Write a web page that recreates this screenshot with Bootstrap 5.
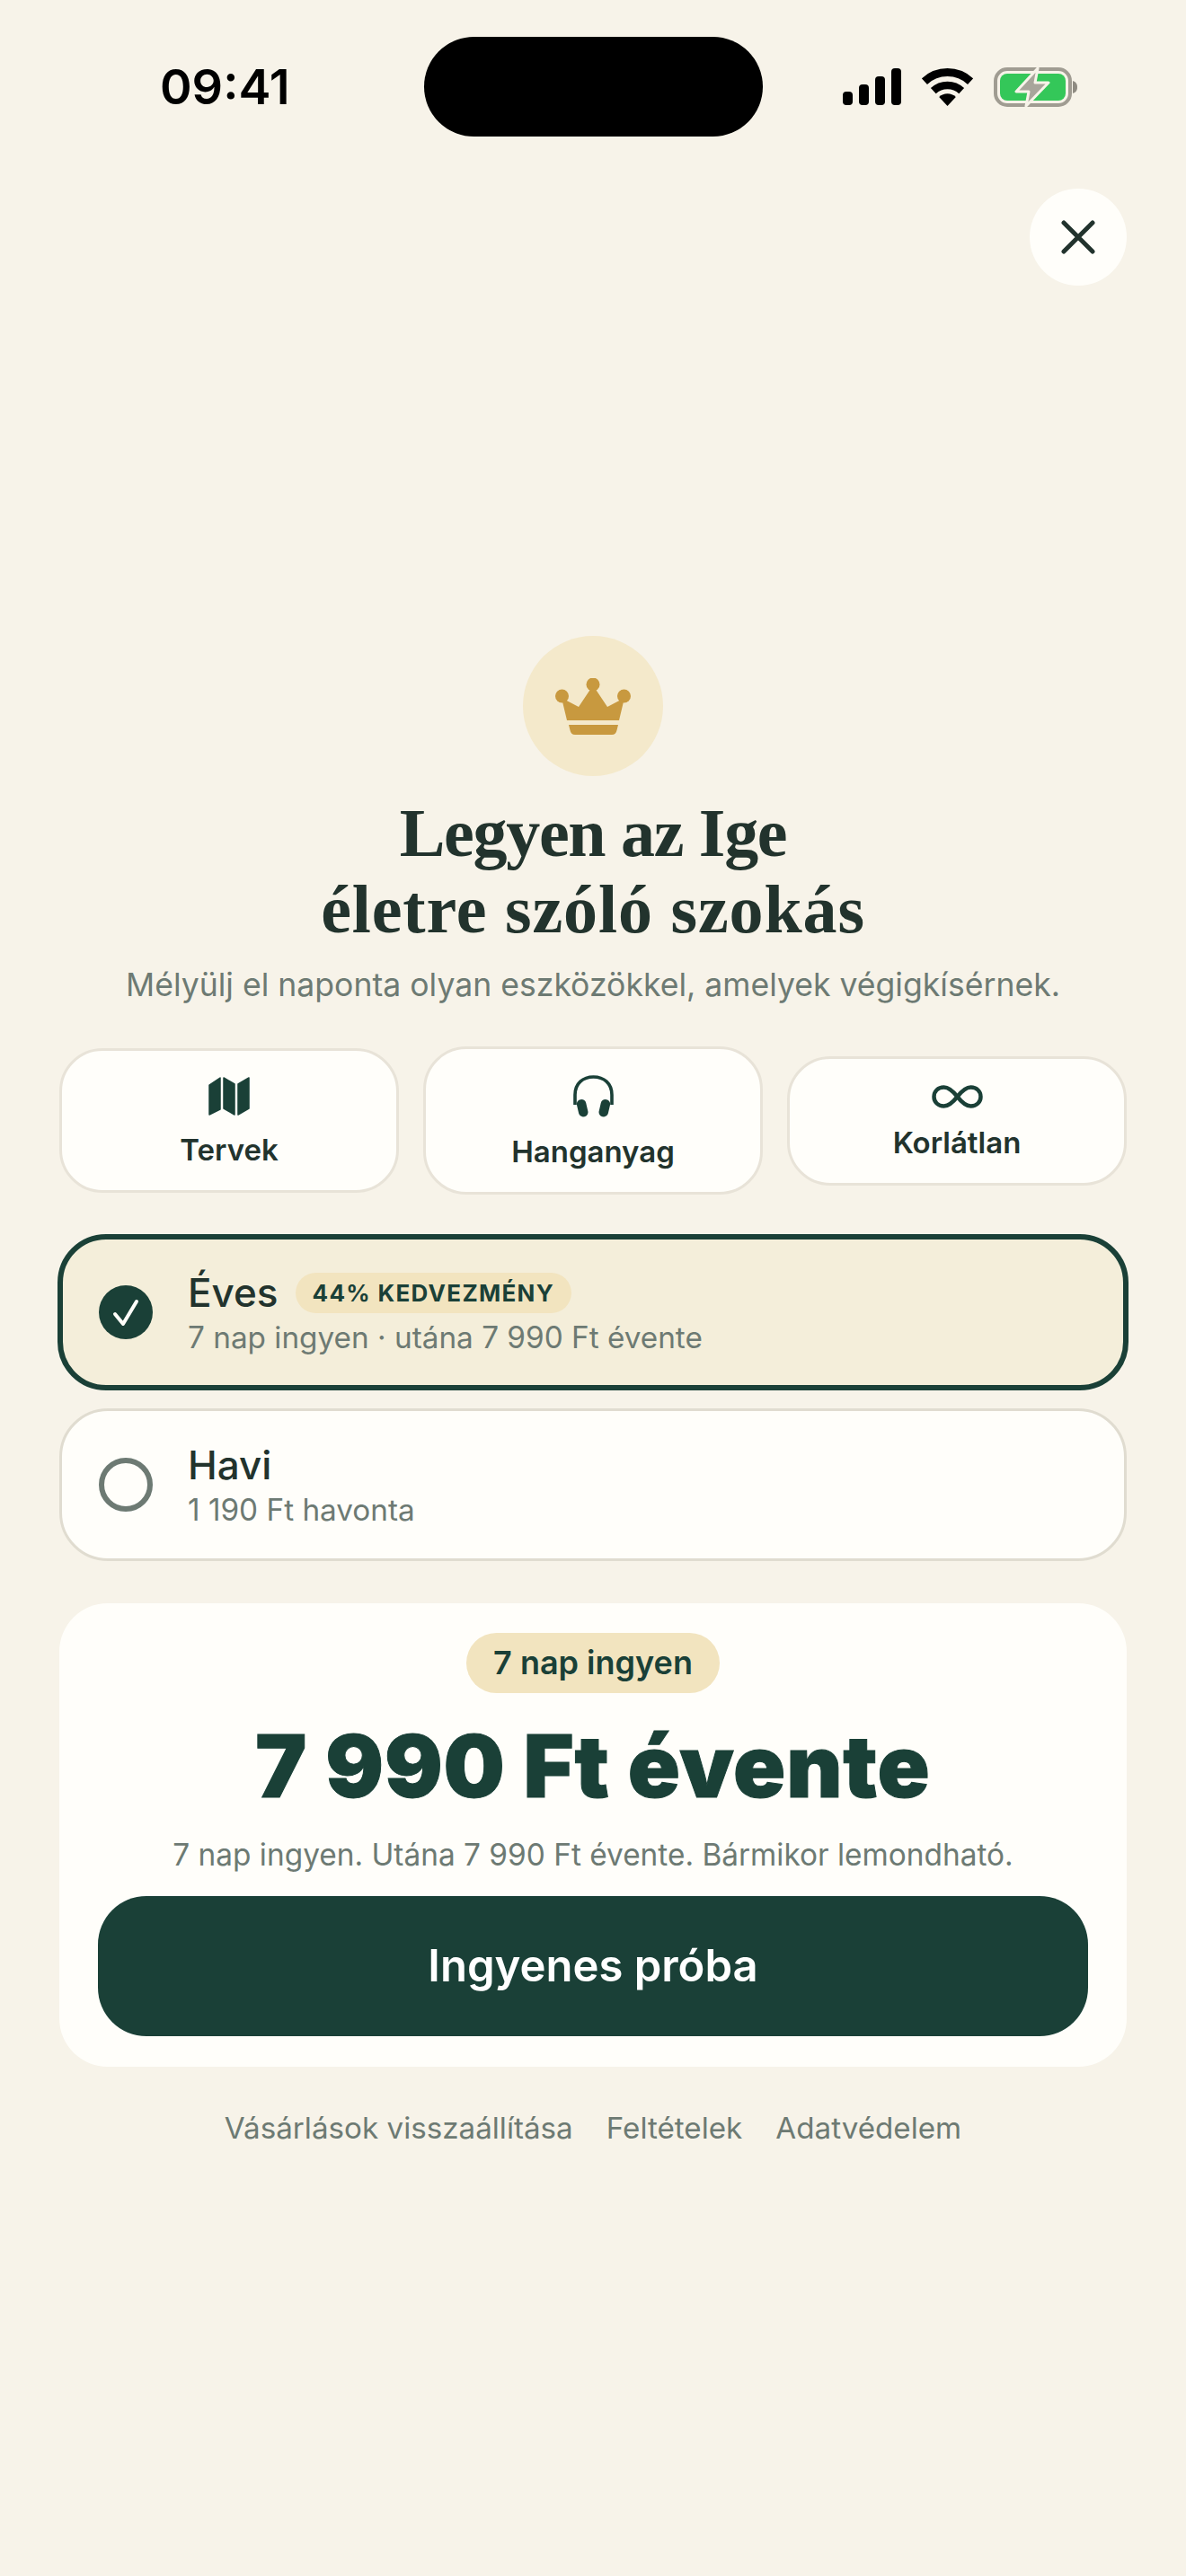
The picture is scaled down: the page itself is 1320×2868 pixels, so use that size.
<!DOCTYPE html>
<html lang="hu">
<head>
  <meta charset="utf-8"/>
  <title>Előfizetés</title>
  <link rel="stylesheet" href="https://cdn.jsdelivr.net/npm/bootstrap@5.3.2/dist/css/bootstrap.min.css">
  <style>
    body {
      background-color: #f7f3e9;
      font-family: Inter, "Liberation Sans", sans-serif;
      color: #22332d;
    }
    .status-row {
      display: grid;
      grid-template-columns: 1fr 377px 1fr;
      padding-top: 41px;
    }
    .status-time {
      padding-left: 178px;
      font-size: 54px;
      font-weight: 600;
      line-height: 111px;
      color: #000;
    }
    .status-island {
      height: 111px;
      background: #000;
      border-radius: 56px;
    }
    .status-icons {
      padding-left: 89px;
      gap: 23px;
      height: 111px;
    }
    .close-wrap {
      padding: 58px 66px 0 0;
    }
    .close-btn {
      width: 108px;
      height: 108px;
      background: #fffefa;
      border: 0;
    }
    .crown-circle {
      width: 156px;
      height: 156px;
      margin-top: 390px;
      background: #f4e9cb;
    }
    .paywall-title {
      margin: 21px 0 0;
      font-family: "Liberation Serif", serif;
      font-size: 76px;
      font-weight: 700;
      line-height: 85px;
      color: #22332d;
    }
    .title-first {
      letter-spacing: -1.3px;
    }
    .title-second {
      letter-spacing: 0.85px;
    }
    .paywall-sub {
      margin: 18px 0 0;
      font-size: 35.6px;
      line-height: 48px;
      color: #6d7a73;
    }
    .content-wrap {
      padding: 0 66px;
    }
    .feature-row {
      gap: 27px;
      margin-top: 44px;
    }
    .feature-box {
      flex: 1 1 0;
      padding: 29px 0 25px;
      background: #fffefa;
      border: 3px solid #e8e3d8;
      border-radius: 48px;
    }
    .feature-box span {
      margin-top: 18px;
      font-size: 33px;
      font-weight: 600;
      line-height: 40px;
    }
    .plan-box {
      margin: 44px -2px 0;
      height: 174px;
      padding-left: 40px;
      background: #f4eeda;
      border: 6px solid #1a4037;
      border-radius: 54px;
    }
    .plan-box.plan-off {
      margin: 20px 0 0;
      height: 170px;
      background: #fffefa;
      border: 3px solid #e0dcd0;
      padding-left: 41px;
    }
    .plan-text {
      margin-left: 39px;
    }
    .plan-name {
      font-size: 44px;
      font-weight: 500;
      line-height: 54px;
    }
    .plan-tag {
      padding: 0 19px;
      height: 45px;
      line-height: 45px;
      margin-left: 19px;
      background: #f2e4bf;
      border-radius: 23px;
      color: #1a4037;
      font-size: 26px;
      font-weight: 700;
      letter-spacing: 1.3px;
    }
    .plan-note {
      margin-top: 2px;
      font-size: 33.3px;
      line-height: 42px;
      color: #6d7a73;
    }
    .price-box {
      margin-top: 47px;
      height: 516px;
      padding: 33px 43px 0;
      background: #fffefa;
      border-radius: 54px;
    }
    .price-pill {
      height: 67px;
      padding: 0 30px;
      line-height: 67px;
      background: #f2e4bf;
      border-radius: 34px;
      color: #1a4037;
      font-size: 36px;
      font-weight: 600;
    }
    .price-big {
      margin-top: 23px;
      font-size: 96px;
      font-weight: 900;
      line-height: 116px;
      letter-spacing: 0.85px;
      -webkit-text-stroke: 1px #1a4037;
      color: #1a4037;
    }
    .price-note {
      margin-top: 20px;
      font-size: 33.4px;
      line-height: 42px;
      color: #6d7a73;
    }
    .price-btn {
      display: block;
      width: 100%;
      height: 156px;
      margin-top: 25px;
      background: #1a4037;
      color: #fff;
      border: 0;
      border-radius: 54px;
      font-size: 49px;
      font-weight: 600;
    }
    .foot-links {
      gap: 37px;
      margin-top: 46px;
      font-size: 33.2px;
      line-height: 44px;
    }
    .foot-links a {
      color: #6d7a73;
      text-decoration: none;
    }
  </style>
</head>
<body>

<!-- Status bar -->
<div class="status-row">
  <div class="status-time">09:41</div>
  <div class="status-island"></div>
  <div class="status-icons d-flex align-items-center">
    <svg width="65" height="41" viewBox="0 0 65 41" fill="#000">
      <rect x="0" y="26" width="11" height="15" rx="4"/>
      <rect x="18" y="18" width="11" height="23" rx="4"/>
      <rect x="36" y="9" width="11" height="32" rx="4"/>
      <rect x="54" y="0" width="11" height="41" rx="4"/>
    </svg>
    <svg width="57" height="42" viewBox="0 0 57 42" fill="none" stroke="#000">
      <path d="M2.9 14.6A37.5 37.5 0 0 1 54.1 14.6" stroke-width="9"/>
      <path d="M12.8 25.2A23 23 0 0 1 44.2 25.2" stroke-width="8.5"/>
      <path d="M28.5 42L19.2 32A13.6 13.6 0 0 1 37.8 32Z" fill="#000" stroke="none"/>
    </svg>
    <svg width="93" height="44" viewBox="0 0 93 44">
      <rect x="2" y="2" width="83" height="40" rx="13" fill="none" stroke="#a09c92" stroke-width="4"/>
      <rect x="7" y="7" width="73" height="30" rx="8" fill="#34c759"/>
      <path d="M88 15c3 1 5 3 5 7s-2 6-5 7Z" fill="#8f8b82"/>
      <path d="M49 1L25 27H39L36 43L61 17H46Z" fill="#a8a59b" stroke="#f7f3e9" stroke-width="3" stroke-linejoin="round"/>
    </svg>
  </div>
</div>

<!-- Close -->
<div class="close-wrap d-flex justify-content-end">
  <button type="button" class="close-btn rounded-circle d-flex align-items-center justify-content-center p-0">
    <svg width="38" height="38" viewBox="0 0 38 38" fill="none" stroke="#22332d" stroke-width="5" stroke-linecap="round">
      <path d="M3 3L35 35M35 3L3 35"/>
    </svg>
  </button>
</div>

<!-- Hero -->
<div class="text-center">
  <div class="crown-circle rounded-circle d-flex align-items-center justify-content-center mx-auto">
    <svg width="84" height="63" viewBox="0 0 84 63" fill="#c8993f">
      <circle cx="42" cy="7" r="7.5"/>
      <circle cx="7.5" cy="20" r="7.5"/>
      <circle cx="76.5" cy="20" r="7.5"/>
      <path d="M42 8L58 32L77 22L71 47H13L7 22L26 32Z"/>
      <path d="M15 52H70L68.500 58C68 61 66 63 63 63H22C19 63 17 61 16.500 58Z"/>
    </svg>
  </div>
  <h1 class="paywall-title"><span class="title-first">Legyen az Ige</span><br><span class="title-second">életre szóló szokás</span></h1>
  <p class="paywall-sub">Mélyülj el naponta olyan eszközökkel, amelyek végigkísérnek.</p>
</div>

<div class="content-wrap">

  <!-- Features -->
  <div class="feature-row d-flex align-items-center">
    <div class="feature-box d-flex flex-column align-items-center">
      <svg width="46" height="43" viewBox="0 0 46 43" fill="#1a4037" stroke="#1a4037" stroke-width="1.500" stroke-linejoin="round">
        <path d="M1 9L13 1V36L1 42Z"/>
        <path d="M17 1L29 8V42L17 35Z"/>
        <path d="M33 8L45 1V35L33 42Z"/>
      </svg>
      <span>Tervek</span>
    </div>
    <div class="feature-box d-flex flex-column align-items-center">
      <svg width="45" height="47" viewBox="0 0 45 47" fill="none" stroke="#1a4037">
        <path d="M2 33V22C2 9 11 2 22.500 2S43 9 43 22V33" stroke-width="3.600"/>
        <rect x="5" y="27" width="10.500" height="19.500" rx="5" fill="#1a4037" stroke="none" transform="rotate(-13 10 37)"/>
        <rect x="29.500" y="27" width="10.500" height="19.500" rx="5" fill="#1a4037" stroke="none" transform="rotate(13 35 37)"/>
      </svg>
      <span>Hanganyag</span>
    </div>
    <div class="feature-box d-flex flex-column align-items-center">
      <svg width="57" height="26" viewBox="0 0 57 26" fill="none" stroke="#1a4037" stroke-width="4.500">
        <path d="M28.500 13C23 6 19 2.500 13.500 2.500C7 2.500 2.500 7 2.500 13S7 23.500 13.500 23.500C19 23.500 23 20 28.500 13C34 6 38 2.500 43.500 2.500C50 2.500 54.500 7 54.500 13S50 23.500 43.500 23.500C38 23.500 34 20 28.500 13Z"/>
      </svg>
      <span>Korlátlan</span>
    </div>
  </div>

  <!-- Plans -->
  <div class="plan-box d-flex align-items-center">
    <svg class="flex-shrink-0" width="60" height="60" viewBox="0 0 60 60">
      <circle cx="30" cy="30" r="30" fill="#1a4037"/>
      <path d="M18 32L27 43L42 18" fill="none" stroke="#fffefa" stroke-width="4" stroke-linecap="round" stroke-linejoin="round"/>
    </svg>
    <div class="plan-text">
      <div class="d-flex align-items-center">
        <span class="plan-name">Éves</span>
        <span class="plan-tag">44% KEDVEZMÉNY</span>
      </div>
      <div class="plan-note">7 nap ingyen · utána 7 990 Ft évente</div>
    </div>
  </div>
  <div class="plan-box plan-off d-flex align-items-center">
    <svg class="flex-shrink-0" width="60" height="60" viewBox="0 0 60 60">
      <circle cx="30" cy="30" r="27" fill="none" stroke="#6d7a73" stroke-width="6"/>
    </svg>
    <div class="plan-text">
      <div class="plan-name">Havi</div>
      <div class="plan-note">1 190 Ft havonta</div>
    </div>
  </div>

  <!-- Price -->
  <div class="price-box text-center">
    <span class="price-pill d-inline-block">7 nap ingyen</span>
    <div class="price-big">7 990 Ft évente</div>
    <div class="price-note">7 nap ingyen. Utána 7 990 Ft évente. Bármikor lemondható.</div>
    <button type="button" class="price-btn">Ingyenes próba</button>
  </div>

  <div class="foot-links d-flex justify-content-center">
    <a href="#">Vásárlások visszaállítása</a>
    <a href="#">Feltételek</a>
    <a href="#">Adatvédelem</a>
  </div>
</div>

<script src="https://cdn.jsdelivr.net/npm/bootstrap@5.3.2/dist/js/bootstrap.bundle.min.js"></script>
</body>
</html>
